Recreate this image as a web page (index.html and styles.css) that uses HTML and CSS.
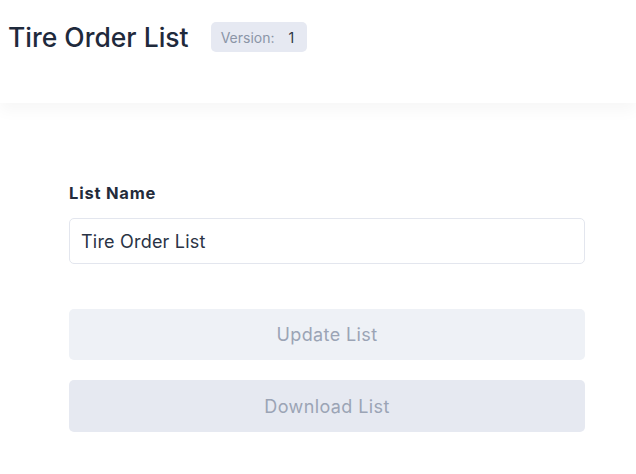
FILE: index.html
```html
<!DOCTYPE html>
<html>
<head>
<meta charset="utf-8">
<link rel="stylesheet" href="styles.css">
</head>
<body>
<header class="header">
  <h1 class="title">Tire Order List</h1>
  <span class="badge"><span class="badge-label">Version:</span><span class="badge-value">1</span></span>
</header>
<main class="content">
  <form class="form">
    <label class="label" for="name">List Name</label>
    <input class="input" id="name" type="text" value="Tire Order List">
    <div class="actions">
      <button type="button" class="btn btn-update">Update List</button>
      <button type="button" class="btn btn-download">Download List</button>
    </div>
  </form>
</main>
</body>
</html>
```

FILE: styles.css
```css
* { box-sizing: border-box; }
html, body { margin: 0; padding: 0; background: #fff; }
body {
  font-family: Inter, "Open Sans", sans-serif;
  color: #1f2a3c;
}
.header {
  display: flex;
  align-items: flex-start;
  gap: 22px;
  height: 103px;
  padding: 22px 8px 51px;
  box-shadow: 0 8px 14px rgba(0, 0, 0, 0.035);
  position: relative;
}
.title {
  margin: 0;
  font-size: 26.5px;
  font-weight: 500;
  line-height: 30px;
  color: #1f2a3c;
}
.badge {
  display: inline-flex;
  align-items: center;
  gap: 14px;
  height: 30px;
  padding: 0 13px 0 10px;
  border-radius: 5px;
  background: #e6e9f2;
  font-size: 14px;
}
.badge-label { color: #8b95a7; }
.badge-value { color: #2c3444; }
.content {
  padding: 80px 0 0 69px;
}
.form {
  width: 516px;
  display: flex;
  flex-direction: column;
}
.label {
  font-size: 16.5px;
  font-weight: 700;
  line-height: 20px;
  letter-spacing: 0.8px;
  color: #232b3a;
  margin-bottom: 15px;
}
.input {
  height: 46px;
  border: 1px solid #e3e6ee;
  border-radius: 5px;
  padding: 0 11px;
  font-family: inherit;
  font-size: 18px;
  letter-spacing: 0.2px;
  color: #2a3345;
  outline: none;
}
.actions {
  display: flex;
  flex-direction: column;
  gap: 20px;
  margin-top: 45px;
}
.btn {
  height: 51px;
  border: none;
  border-radius: 5px;
  font-family: inherit;
  font-size: 18px;
  letter-spacing: 0.4px;
  color: #9ba4b5;
}
.btn-update { background: #eef1f6; }
.btn-download { background: #e6e9f1; height: 52px; }
```
